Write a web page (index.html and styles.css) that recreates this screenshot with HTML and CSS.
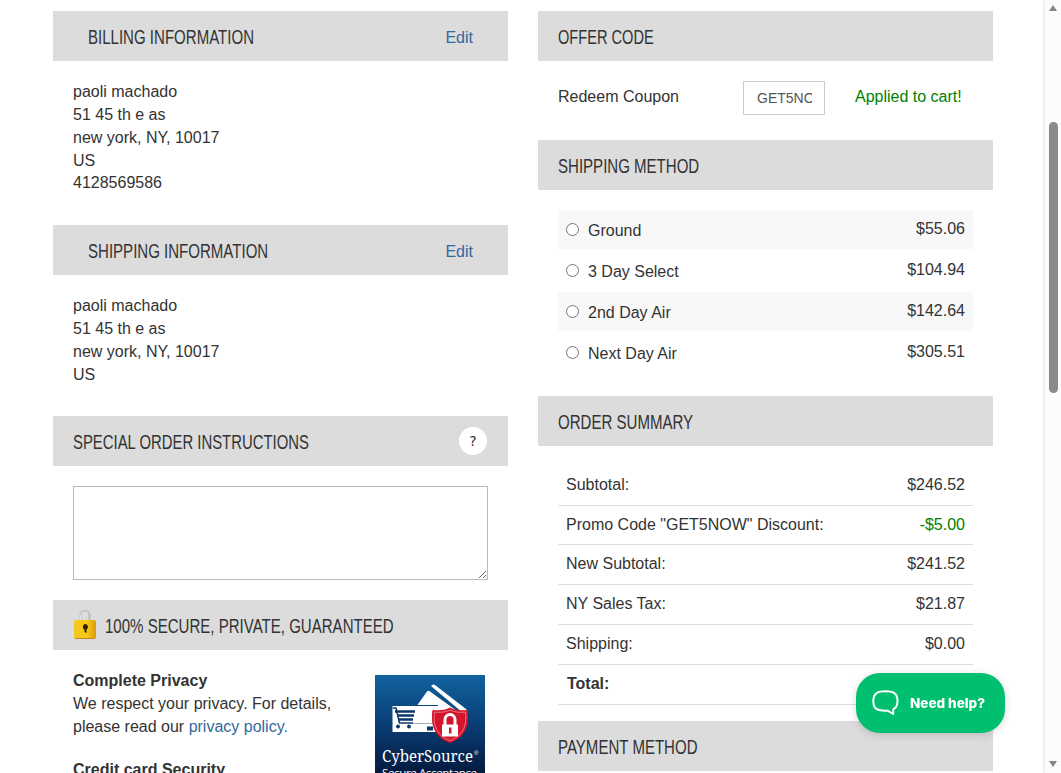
FILE: index.html
```
<!DOCTYPE html>
<html lang="en">
<head>
    <meta charset="UTF-8">
    <title>Checkout</title>
    <link rel="stylesheet" href="styles.css">
</head>
<body>
    <div class="container">
        <div class="col">
            <div class="bar bar-indent"><h3>BILLING INFORMATION</h3><a href="#" class="edit">Edit</a></div>
            <div class="address">
                paoli machado<br>
                51 45 th e as<br>
                new york, NY, 10017<br>
                US<br>
                4128569586
            </div>
            <div class="bar bar-indent"><h3>SHIPPING INFORMATION</h3><a href="#" class="edit">Edit</a></div>
            <div class="address">
                paoli machado<br>
                51 45 th e as<br>
                new york, NY, 10017<br>
                US
            </div>
            <div class="bar"><h3 class="narrow">SPECIAL ORDER INSTRUCTIONS</h3><button class="help">?</button></div>
            <textarea class="notes"></textarea>
            <div class="bar">
                <svg class="lock" width="24" height="30" viewBox="0 0 24 30">
                    <defs>
                        <linearGradient id="gold"><stop offset="0" stop-color="#f3c81f"/><stop offset=".6" stop-color="#f8c814"/><stop offset="1" stop-color="#dc9a10"/></linearGradient>
                    </defs>
                    <path d="M7.500 10V5.500a4.500 4.500 0 0 1 9 0V10" fill="none" stroke="#b9baba" stroke-width="2"/>
                    <path d="M7.500 10V5.500a4.500 4.500 0 0 1 8-2" fill="none" stroke="#e6e6e6" stroke-width="1"/>
                    <rect x="1" y="10" width="22" height="19" rx="2" fill="url(#gold)"/>
                    <path d="M2 28.500h20" stroke="#bd8a1d"/>
                    <path d="M12 14a3 3 0 0 1 1.500 5.600V23l-2-1v-2.400A3 3 0 0 1 12 14z" fill="#2b2108"/>
                </svg>
                <h3>100% SECURE, PRIVATE, GUARANTEED</h3>
            </div>
            <div class="secure">
                <div class="secure-text">
                    <p><b>Complete Privacy</b><br>
                    We respect your privacy. For details, please read our <a href="#">privacy policy.</a></p>
                    <p><b>Credit card Security</b></p>
                </div>
                <svg class="cyber" width="110" height="120" viewBox="0 0 110 120">
                    <defs>
                        <linearGradient id="sea" x2="0" y2="1"><stop offset="0" stop-color="#10639f"/><stop offset=".45" stop-color="#093a70"/><stop offset=".8" stop-color="#051c42"/><stop offset="1" stop-color="#04142f"/></linearGradient>
                    </defs>
                    <rect width="110" height="120" fill="url(#sea)"/>
                    <path d="M41 32 52 16.500q1.500-1.500 3 0L82 36v20H41z" fill="#fff"/>
                    <path d="M56 11q2-2.500 4-1L91 34q2 1.500 1 4L88 38z" fill="#fff"/>
                    <rect x="17.500" y="31" width="46" height="26" fill="#fff"/>
                    <path d="M41 30.500h22" stroke="#0a4680"/>
                    <path d="M18 33h3l3.500 15H38" fill="none" stroke="#0a3769" stroke-width="1.500"/>
                    <path d="M20 36.500h20M22 40.500h17M23 44.500h15" stroke="#0a3769" stroke-width="2.500"/>
                    <circle cx="23" cy="51.500" r="1.900" fill="#0a3769"/>
                    <circle cx="34" cy="51.500" r="1.900" fill="#0a3769"/>
                    <path d="M38 48.500h20" stroke="#9fb0c2" stroke-width="1"/>
                    <rect x="52" y="51.500" width="6" height="4" fill="#0a3769"/>
                    <path d="M75 32.500c5 3 11 3 17.500 2.500 2 14-1 27-17.500 33-16.500-6-19.500-19-17.500-33 6.500.5 12.500.5 17.500-2.500z" fill="#d4152b"/>
                    <path d="M75 35c5 2.500 10 2.500 15.500 2.200 1.500 12-1.500 23-15.500 28.500-14-5.500-17-16.500-15.500-28.500 5.500.3 10.500.3 15.500-2.200z" fill="none" stroke="#ef8d98" stroke-width=".8"/>
                    <path d="M70 51v-6.500a5 5 0 0 1 10 0V51" fill="none" stroke="#fff" stroke-width="3"/>
                    <rect x="67" y="49.500" width="16" height="12" fill="#fff"/>
                    <rect x="74" y="52.500" width="2.500" height="6" fill="#d4152b"/>
                    <text x="7" y="87" class="cyber-name" textLength="91" lengthAdjust="spacingAndGlyphs">CyberSource</text>
                    <text x="99" y="80" class="cyber-dot">®</text>
                    <text x="7" y="102" class="cyber-sub" textLength="95">Secure Acceptance</text>
                </svg>
            </div>
        </div>

        <div class="col">
            <div class="bar"><h3 class="narrower">OFFER CODE</h3></div>
            <div class="coupon">
                <span class="coupon-label">Redeem Coupon</span>
                <input type="text" class="coupon-code" value="GET5NOW">
                <span class="green">Applied to cart!</span>
            </div>
            <div class="bar"><h3>SHIPPING METHOD</h3></div>
            <div class="methods">
                <label class="method"><input type="radio" name="ship"><span>Ground</span><span class="price">$55.06</span></label>
                <label class="method"><input type="radio" name="ship"><span>3 Day Select</span><span class="price">$104.94</span></label>
                <label class="method"><input type="radio" name="ship"><span>2nd Day Air</span><span class="price">$142.64</span></label>
                <label class="method"><input type="radio" name="ship"><span>Next Day Air</span><span class="price">$305.51</span></label>
            </div>
            <div class="bar"><h3>ORDER SUMMARY</h3></div>
            <div class="summary">
                <div class="line"><span>Subtotal:</span><span>$246.52</span></div>
                <div class="line"><span>Promo Code "GET5NOW" Discount:</span><span class="green">-$5.00</span></div>
                <div class="line"><span>New Subtotal:</span><span>$241.52</span></div>
                <div class="line"><span>NY Sales Tax:</span><span>$21.87</span></div>
                <div class="line"><span>Shipping:</span><span>$0.00</span></div>
                <div class="line total"><b>Total:</b></div>
            </div>
            <div class="bar"><h3>PAYMENT METHOD</h3></div>
        </div>
    </div>

    <button class="chat">
        <svg width="27" height="26" viewBox="0 0 27 26" fill="none" stroke="#fff" stroke-width="2" stroke-linejoin="round"><path d="M13.500 1.300C20 1.300 25.500 2 25.500 11c0 4-.5 6.500-4.300 8.300V24l-5.500-3.300C6 21.200 1.300 19.500 1.300 11c0-9 5.700-9.700 12.200-9.700z"/></svg>
        <span>Need help?</span>
    </button>

    <div class="scrollbar">
        <i class="arrow up"></i>
        <i class="thumb"></i>
        <i class="arrow down"></i>
    </div>
</body>
</html>
```
FILE: styles.css
```
*{box-sizing:border-box}
html,body{height:100%}
body{margin:0;overflow:hidden;background:#fff;color:#333;font:16px/22.857px "Liberation Sans",Arial,sans-serif}
p{margin:0 0 20px}
a{color:#33699a;text-decoration:none}
.container{display:flex;gap:30px;padding:11px 0 0 53px}
.col{width:455px}

/* section headings */
.bar{display:flex;align-items:center;height:50px;padding:0 20px;background:#dcdcdc}
.bar-indent{padding:0 35px}
.bar h3{margin:0;padding-top:2px;font-size:20px;font-weight:400;line-height:24px;white-space:nowrap;transform:scaleX(.752);transform-origin:0 50%}
.bar .narrow{transform:scaleX(.744)}
.bar .narrower{transform:scaleX(.73)}
.edit{margin-left:auto;padding-top:5px}
.help{width:28px;height:28px;margin:0 1px 0 auto;padding:0;border:0;border-radius:50%;background:#fff;color:#333;font:14px/28px "DejaVu Sans","Liberation Sans",sans-serif}
.lock{flex:none;margin-right:8px}

.address{padding:20px 20px 29.700px}
.notes{display:block;width:415px;height:94px;margin:20px;border:1px solid #bbb;background:#fff;resize:both}
.secure{display:flex;padding:19px 23px 0 20px;justify-content:space-between}
.secure-text{width:275px;padding-top:1px}
.cyber{margin-top:6px;flex:none}
.cyber-name{font:17px "Noto Serif","Liberation Serif",serif;fill:#fff}
.cyber-dot{font:6px "Liberation Sans",sans-serif;fill:#fff}
.cyber-sub{font:11.500px "Open Sans","Noto Sans",sans-serif;fill:#fff}

/* coupon */
.coupon{display:flex;height:79px;padding:20px 20px 0}
.coupon-label{width:185px;padding-top:5px}
.coupon-code{width:82px;height:34px;margin-right:30px;padding:6px 12px 6px 13px;border:1px solid #ccc;color:#555;font:14px "Liberation Sans",Arial,sans-serif}
.coupon .green{padding-top:5px}
.green{color:#008000}

/* shipping methods */
.methods{padding:20px 20px 22px}
.method{display:flex;height:41px;padding:8px;border-bottom:2px solid #fff}
.method:nth-child(odd){background:#f8f8f8}
.method input{width:13px;height:13px;margin:5px 9px 0 0}
.method span{padding-top:2px}
.method .price{margin-left:auto;padding:0}

/* totals */
.summary{padding:19.700px 20px 15.800px}
.line{display:flex;justify-content:space-between;height:39.860px;padding:8px;border-bottom:1px solid #ddd}
.total{padding-left:9px}

.chat{position:fixed;left:856px;top:673px;display:flex;align-items:center;gap:11px;width:149px;height:60px;padding:0 0 0 16px;border:0;border-radius:24px;background:#00c070;color:#fff;font:800 13.500px Inter,sans-serif;box-shadow:0 2px 8px rgba(0,0,0,.15)}

.scrollbar{position:fixed;top:0;right:0;display:flex;flex-direction:column;align-items:center;width:16px;height:100%;padding:5px 0 6px;background:#fcfcfc;box-shadow:-1px 0 3px rgba(0,0,0,.12)}
.arrow{border:4px solid transparent}
.up{border-top:0;border-bottom:6px solid #858585}
.down{border-bottom:0;border-top:6px solid #858585;margin-top:auto}
.thumb{width:9px;height:271px;margin-top:111px;border-radius:5px;background:#8a8a8a}
```
